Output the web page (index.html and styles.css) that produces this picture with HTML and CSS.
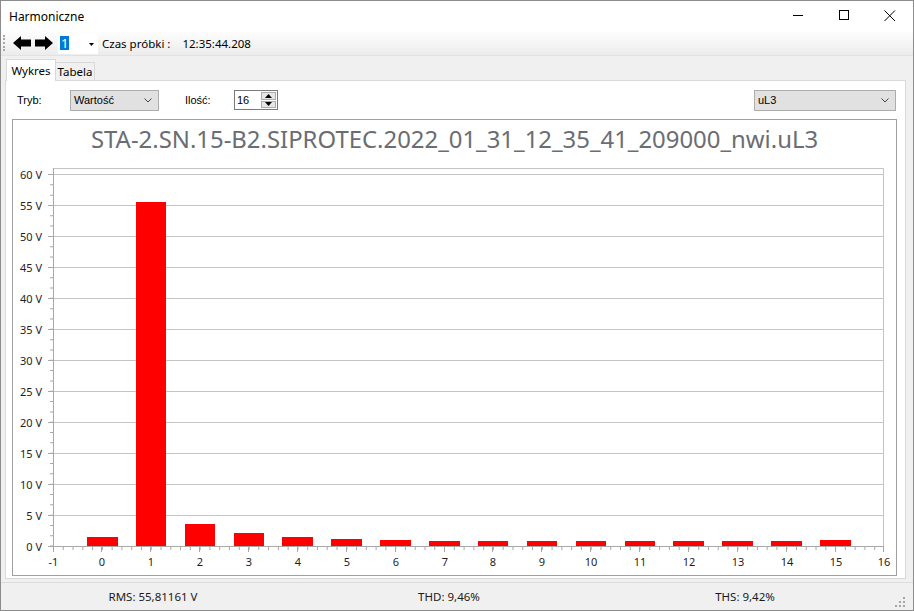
FILE: index.html
```html
<!DOCTYPE html>
<html lang="pl">
<head>
  <meta charset="UTF-8" />
  <title>Harmoniczne</title>
  <link rel="stylesheet" href="styles.css">
</head>
<body>
<div class="window">

  <div class="titlebar">
    <span class="title">Harmoniczne</span>
    <div class="caption-btn"><svg width="12" height="12"><path d="M1 5.5H11" stroke="#000" /></svg></div>
    <div class="caption-btn"><svg width="12" height="12"><rect x="1.5" y="0.5" width="9" height="9" fill="none" stroke="#000" /></svg></div>
    <div class="caption-btn"><svg width="12" height="12"><path d="M0.5 0.5L11 11M11 0.5L0.5 11" stroke="#000" /></svg></div>
  </div>

  <div class="toolbar">
    <span class="grip"></span>
    <svg class="arrow" width="18" height="14" viewBox="0 0 18 14"><path d="M0 7L8 0V3.5H18V10.5H8V14Z" fill="#000" /></svg>
    <svg class="arrow arrow-next" width="18" height="14" viewBox="0 0 18 14"><path d="M18 7L10 0V3.5H0V10.5H10V14Z" fill="#000" /></svg>
    <div class="tool-combo">
      <span class="sel">1</span>
      <svg class="drop" width="5" height="3"><path d="M0 0H5L2.5 3Z" fill="#000" /></svg>
    </div>
    <span class="tool-label">Czas próbki :</span>
    <span class="tool-time">12:35:44.208</span>
  </div>

  <div class="tabs">
    <div class="tab-strip">
      <div class="tab active">Wykres</div>
      <div class="tab">Tabela</div>
    </div>
    <div class="tab-panel">
      <div class="options">
        <span class="opt-label">Tryb:</span>
        <div class="combo combo-mode">
          <span>Wartość</span>
          <svg width="8" height="5"><path d="M0.5 0.5L4 4L7.5 0.5" fill="none" stroke="#444" /></svg>
        </div>
        <span class="opt-label opt-count">Ilość:</span>
        <div class="numeric">
          <span>16</span>
          <div class="spin">
            <span class="spin-btn"><svg width="7" height="4"><path d="M0 4H7L3.5 0Z" fill="#000" /></svg></span>
            <span class="spin-btn"><svg width="7" height="4"><path d="M0 0H7L3.5 4Z" fill="#000" /></svg></span>
          </div>
        </div>
        <div class="combo combo-channel">
          <span>uL3</span>
          <svg width="8" height="5"><path d="M0.5 0.5L4 4L7.5 0.5" fill="none" stroke="#444" /></svg>
        </div>
      </div>

      <div class="chart">
        <div class="chart-title">STA-2.SN.15-B2.SIPROTEC.2022_01_31_12_35_41_209000_nwi.uL3</div>
        <svg class="plot" width="882" height="415" viewBox="0 0 882 415">
          <!-- siatka -->
          <path d="M40 8.5H870.5V386 M40 14.5H870 M40 45.5H870 M40 76.5H870 M40 107.5H870 M40 138.5H870 M40 169.5H870 M40 200.5H870 M40 231.5H870 M40 262.5H870 M40 293.5H870 M40 324.5H870 M40 355.5H870" fill="none" stroke="#c4c4c4" />

          <!-- słupki -->
          <g fill="#ff0000">
            <rect x="74" y="377" width="31" height="9" />
            <rect x="123" y="42" width="30" height="344" />
            <rect x="172" y="364" width="30" height="22" />
            <rect x="221" y="373" width="30" height="13" />
            <rect x="269" y="377" width="31" height="9" />
            <rect x="318" y="379" width="31" height="7" />
            <rect x="367" y="380" width="31" height="6" />
            <rect x="416" y="381" width="31" height="5" />
            <rect x="465" y="381" width="30" height="5" />
            <rect x="514" y="381" width="30" height="5" />
            <rect x="563" y="381" width="30" height="5" />
            <rect x="612" y="381" width="30" height="5" />
            <rect x="660" y="381" width="31" height="5" />
            <rect x="709" y="381" width="31" height="5" />
            <rect x="758" y="381" width="31" height="5" />
            <rect x="807" y="380" width="31" height="6" />
          </g>

          <!-- osie -->
          <g stroke="#a8a8a8" fill="none">
            <path d="M40.5 8V387 M40 386.5H871" />
            <path d="M35 14.5H40 M35 45.5H40 M35 76.5H40 M35 107.5H40 M35 138.5H40 M35 169.5H40 M35 200.5H40 M35 231.5H40 M35 262.5H40 M35 293.5H40 M35 324.5H40 M35 355.5H40 M35 386.5H40" />
            <line x1="38.5" y1="14" x2="38.5" y2="387" stroke-width="3" stroke-dasharray="1 9.322" />
            <path d="M40.5 387V392 M88.5 387V392 M137.5 387V392 M186.5 387V392 M235.5 387V392 M284.5 387V392 M333.5 387V392 M382.5 387V392 M431.5 387V392 M479.5 387V392 M528.5 387V392 M577.5 387V392 M626.5 387V392 M675.5 387V392 M724.5 387V392 M773.5 387V392 M822.5 387V392 M870.5 387V392" />
            <line x1="40" y1="388.5" x2="871" y2="388.5" stroke-width="3" stroke-dasharray="1 8.776" />
          </g>

          <g class="ylabels" text-anchor="end">
            <text x="29" y="18.5">60 V</text>
            <text x="29" y="49.5">55 V</text>
            <text x="29" y="80.5">50 V</text>
            <text x="29" y="111.5">45 V</text>
            <text x="29" y="142.5">40 V</text>
            <text x="29" y="173.5">35 V</text>
            <text x="29" y="204.5">30 V</text>
            <text x="29" y="235.5">25 V</text>
            <text x="29" y="266.5">20 V</text>
            <text x="29" y="297.5">15 V</text>
            <text x="29" y="328.5">10 V</text>
            <text x="29" y="359.5">5 V</text>
            <text x="29" y="390.5">0 V</text>
          </g>

          <g class="xlabels" text-anchor="middle">
            <text x="40.5" y="406">-1</text>
            <text x="89" y="406">0</text>
            <text x="138" y="406">1</text>
            <text x="187" y="406">2</text>
            <text x="236" y="406">3</text>
            <text x="285" y="406">4</text>
            <text x="334" y="406">5</text>
            <text x="383" y="406">6</text>
            <text x="432" y="406">7</text>
            <text x="480" y="406">8</text>
            <text x="529" y="406">9</text>
            <text x="578" y="406">10</text>
            <text x="627" y="406">11</text>
            <text x="676" y="406">12</text>
            <text x="725" y="406">13</text>
            <text x="774" y="406">14</text>
            <text x="823" y="406">15</text>
            <text x="871" y="406">16</text>
          </g>
        </svg>
      </div>
    </div>
  </div>

  <div class="statusbar">
    <span class="status-item">RMS: 55,81161 V</span>
    <span class="status-item">THD: 9,46%</span>
    <span class="status-item">THS: 9,42%</span>
    <svg class="size-grip" width="11" height="11">
      <g fill="#a6a6a6">
        <rect x="8" y="0" width="2" height="2" />
        <rect x="4" y="4" width="2" height="2" />
        <rect x="8" y="4" width="2" height="2" />
        <rect x="0" y="8" width="2" height="2" />
        <rect x="4" y="8" width="2" height="2" />
        <rect x="8" y="8" width="2" height="2" />
      </g>
    </svg>
  </div>

</div>
</body>
</html>
```

FILE: styles.css
```css
* {
  margin: 0; padding: 0;
  box-sizing: border-box;
}
body {
  width: 914px;
  height: 611px;
  overflow: hidden;
  background: #f0f0f0;
  font-family: 'Noto Sans', sans-serif;
  font-size: 11.5px;
  color: #000;
}
.window {
  width: 914px;
  height: 611px;
  border: 1px solid #8c8c8c;
  background: #f0f0f0;
  display: flex;
  flex-direction: column;
}

/* pasek tytułu */
.titlebar {
  height: 30px;
  flex: none;
  background: #fff;
  display: flex;
  align-items: center;
}
.title {
  flex: 1;
  padding-left: 8px;
  font-size: 12px;
}
.caption-btn {
  width: 46px;
  height: 30px;
  display: flex;
  align-items: center;
  justify-content: center;
}

/* pasek narzędzi */
.toolbar {
  height: 25px;
  flex: none;
  background: linear-gradient(#fefefe, #ececec);
  border-bottom: 1px solid #e2e2e2;
  display: flex;
  align-items: center;
}
.grip {
  width: 2px;
  height: 16px;
  margin-left: 2px;
  border-left: 2px dotted #a8a8a8;
}
.arrow {
  margin-left: 8px;
}
.arrow-next {
  margin-left: 4px;
}
.tool-combo {
  width: 40px;
  height: 21px;
  margin-left: 5px;
  background: #fff;
  display: flex;
  align-items: center;
  padding-left: 2px;
}
.tool-combo .sel {
  background: #0078d7;
  color: #fff;
  font-size: 13px;
  line-height: 14px;
  padding: 0 1px;
}
.tool-combo .drop {
  margin-left: auto;
  margin-right: 4px;
  margin-top: 2px;
}
.tool-label {
  margin-left: 4px;
}
.tool-time {
  margin-left: 12px;
}

/* zakładki */
.tabs {
  flex: 1;
  padding: 0 7px 3px 4px;
  display: flex;
  flex-direction: column;
}
.tab-strip {
  height: 24px;
  flex: none;
  display: flex;
  align-items: flex-end;
  padding-left: 1px;
}
.tab {
  width: 40px;
  height: 18px;
  margin-left: -1px;
  border: 1px solid #d9d9d9;
  border-bottom: none;
  background: #f0f0f0;
  text-align: center;
  line-height: 17px;
}
.tab.active {
  width: 50px;
  height: 22px;
  margin-left: 0;
  margin-bottom: -1px;
  background: #fff;
  line-height: 21px;
  position: relative;
  z-index: 1;
}
.tab-panel {
  flex: 1;
  background: #fff;
  border: 1px solid #d9d9d9;
  padding: 8px 8px 2px 6px;
  display: flex;
  flex-direction: column;
}

/* opcje wykresu */
.options {
  height: 22px;
  flex: none;
  display: flex;
  align-items: center;
  padding-left: 5px;
  font-family: 'Liberation Sans', Arial, sans-serif;
  font-size: 11px;
}
.opt-label {
  width: 53px;
}
.opt-count {
  width: 49px;
  margin-left: 26px;
}
.combo {
  height: 21px;
  background: #e1e1e1;
  border: 1px solid #adadad;
  display: flex;
  align-items: center;
  justify-content: space-between;
  padding: 0 6px 0 3px;
}
.combo-mode {
  width: 89px;
}
.combo-channel {
  width: 142px;
  margin-left: auto;
  margin-right: 1px;
}
.numeric {
  width: 44px;
  height: 20px;
  border: 1px solid #7a7a7a;
  display: flex;
  align-items: center;
  padding-left: 2px;
}
.numeric span {
  flex: 1;
}
.spin {
  width: 16px;
  height: 18px;
  display: flex;
  flex-direction: column;
  gap: 1px;
  padding: 1px 1px 1px 0;
}
.spin-btn {
  flex: 1;
  background: #e6e6e6;
  border: 1px solid #adadad;
  display: flex;
  align-items: center;
  justify-content: center;
}

/* wykres */
.chart {
  flex: 1;
  margin-top: 8px;
  border: 1px solid #a0a0a0;
  background: #fff;
  display: flex;
  flex-direction: column;
}
.chart-title {
  height: 40px;
  flex: none;
  line-height: 38px;
  text-align: center;
  font-size: 23.9px;
  color: #6a6d72;
  white-space: nowrap;
}
.plot {
  display: block;
  font-family: 'Noto Sans', sans-serif;
  font-size: 11px;
}
.plot text {
  fill: #1e1e1e;
}

/* pasek stanu */
.statusbar {
  height: 28px;
  flex: none;
  border-top: 1px solid #dcdcdc;
  display: flex;
  align-items: center;
  padding-left: 4px;
}
.status-item {
  width: 296px;
  text-align: center;
  color: #1a1a1a;
}
.size-grip {
  margin-left: auto;
  margin-right: 7px;
  align-self: flex-end;
  margin-bottom: 2px;
}
```
